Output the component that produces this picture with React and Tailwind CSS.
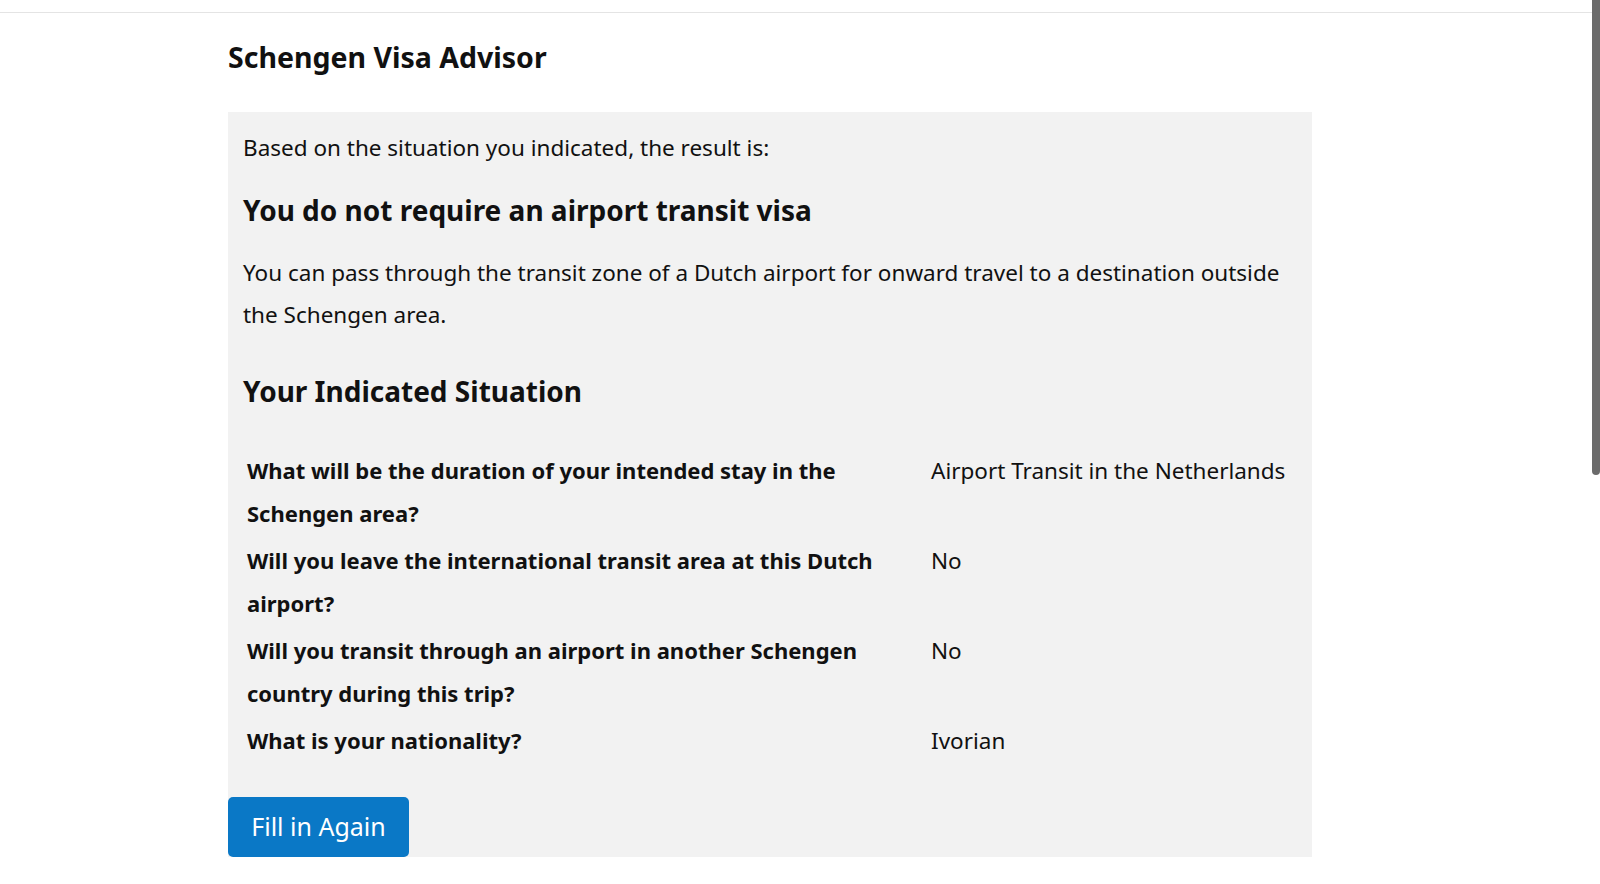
const rows = [
  {
    question: "What will be the duration of your intended stay in the Schengen area?",
    answer: "Airport Transit in the Netherlands",
  },
  {
    question: "Will you leave the international transit area at this Dutch airport?",
    answer: "No",
  },
  {
    question: "Will you transit through an airport in another Schengen country during this trip?",
    answer: "No",
  },
  {
    question: "What is your nationality?",
    answer: "Ivorian",
  },
];

export default function App() {
  return (
    <div className="h-[884px] overflow-hidden bg-white flex text-[#111] font-['Noto_Sans',sans-serif]">
      <div className="flex-1">
        <div className="h-[13px] border-b border-[#e4e4e4]" />
        <div className="pl-[228px]">
          <h1 className="mt-[24px] text-[28.5px] leading-[40px] font-bold">Schengen Visa Advisor</h1>

          <div className="mt-[35px] w-[1084px] bg-[#f2f2f2]">
            <div className="px-[15px] pt-[15px]">
              <p className="text-[22.5px] leading-[42px]">Based on the situation you indicated, the result is:</p>
              <h2 className="mt-[20px] text-[28px] leading-[42px] font-bold">
                You do not require an airport transit visa
              </h2>
              <p className="mt-[21px] text-[22.5px] leading-[42px]">
                You can pass through the transit zone of a Dutch airport for onward travel to a destination outside
                the Schengen area.
              </p>
              <h3 className="mt-[34px] text-[28px] leading-[42px] font-bold">Your Indicated Situation</h3>

              <table className="mt-[35px] w-full border-collapse text-[22px] leading-[43px]">
                <tbody>
                  {rows.map((row) => (
                    <tr key={row.question}>
                      <th className="w-[684px] px-[4px] py-[2px] pr-[40px] text-left align-top font-bold">
                        {row.question}
                      </th>
                      <td className="px-[4px] py-[2px] align-top text-[22.5px]">{row.answer}</td>
                    </tr>
                  ))}
                </tbody>
              </table>
            </div>

            <button
              type="button"
              className="mt-[33px] h-[60px] w-[181px] rounded-[5px] bg-[#0a78c6] text-[25px] text-white"
            >
              Fill in Again
            </button>
          </div>
        </div>
      </div>

      {/* scrollbar */}
      <div className="w-[8px]">
        <div className="h-[475px] w-[8px] rounded-b-[4px] bg-[#6b6b6b]" />
      </div>
    </div>
  );
}
